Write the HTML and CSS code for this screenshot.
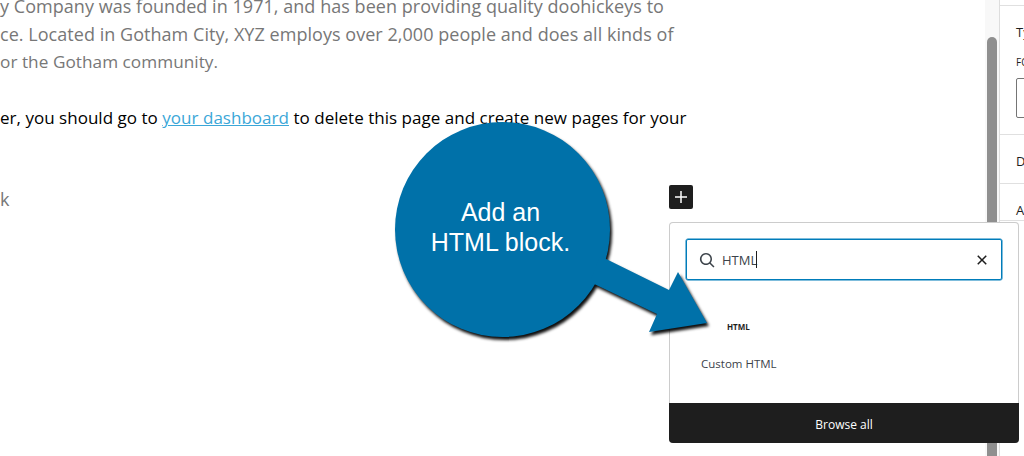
FILE: index.html
```html
<!DOCTYPE html>
<html lang="en">
<head>
  <meta charset="UTF-8" />
  <title>Edit Page</title>
  <link rel="stylesheet" href="styles.css">
</head>
<body>

  <div class="editor">
    <main class="canvas">
      <p class="para muted">
        <span>y Company was founded in 1971, and has been providing quality doohickeys to</span>
        <span>ce. Located in Gotham City, XYZ employs over 2,000 people and does all kinds of</span>
        <span class="tight">or the Gotham community.</span>
      </p>
      <p class="para">
        <span>er, you should go to <a href="#">your dashboard</a> to delete this page and create new pages for your</span>
      </p>
      <p class="para muted last">
        <span>k</span>
      </p>
    </main>

    <div class="scrollbar"><div class="thumb"></div></div>

    <aside class="sidebar">
      <div class="side-top"></div>
      <div class="side-section typo">
        <div class="side-title">Ty</div>
        <div class="side-label">FO</div>
        <div class="side-input"></div>
      </div>
      <div class="side-section short"><div class="side-title">D</div></div>
      <div class="side-section"><div class="side-title">A</div></div>
    </aside>
  </div>

  <!-- block inserter -->
  <button class="add-btn" aria-label="Add block">
    <svg width="24" height="24" viewBox="0 0 24 24"><path d="M11.25 6h1.5v5.25H18v1.5h-5.25V18h-1.5v-5.25H6v-1.5h5.25z" fill="#fff"/></svg>
  </button>

  <div class="inserter">
    <div class="search">
      <svg class="search-icon" width="24" height="24" viewBox="0 0 24 24"><path d="M13 5c-3.3 0-6 2.7-6 6 0 1.4.5 2.7 1.3 3.7l-3.8 3.8 1.1 1.1 3.8-3.8c1 .8 2.3 1.3 3.7 1.3 3.3 0 6-2.7 6-6S16.3 5 13 5zm0 10.5c-2.5 0-4.5-2-4.5-4.5s2-4.5 4.5-4.5 4.5 2 4.5 4.5-2 4.5-4.5 4.5z" fill="#3c434a" transform="matrix(-1 0 0 1 24 0)"/></svg>
      <span class="search-text">HTML</span><span class="caret"></span>
      <svg class="clear-icon" width="24" height="24" viewBox="0 0 24 24"><path d="M12 13.06l3.71 3.71 1.06-1.06L13.06 12l3.71-3.71-1.06-1.06L12 10.94 8.29 7.23 7.23 8.29 10.94 12l-3.71 3.71 1.06 1.06z" fill="#1e1e1e"/></svg>
    </div>
    <div class="results">
      <div class="block-item">
        <div class="block-icon">HTML</div>
        <div class="block-name">Custom HTML</div>
      </div>
    </div>
    <div class="browse">Browse all</div>
  </div>

  <!-- annotation drawn over the screenshot -->
  <svg class="callout" width="1024" height="456" viewBox="0 0 1024 456">
    <g class="callout-shape">
      <circle cx="502.5" cy="229.5" r="107.5"/>
      <polygon points="600,256 669,290 678,272 707,323 649,332 657,314 590,282"/>
    </g>
    <text x="500.5" y="221">Add an</text>
    <text x="500.5" y="251">HTML block.</text>
  </svg>

</body>
</html>
```

FILE: styles.css
```css
* {
  box-sizing: border-box;
}
html, body {
  height: 100%;
}
body {
  margin: 0;
  background: #fff;
  font-family: "Open Sans", sans-serif;
  color: #000;
  overflow: hidden;
}
.editor {
  display: flex;
  height: 456px;
}
.canvas {
  flex: 1;
  overflow: hidden;
  margin-top: -8px;
}
.para {
  margin: 0 0 28px;
  font-size: 17px;
  letter-spacing: .025px;
  line-height: 28px;
  white-space: nowrap;
}
.para span {
  display: block;
}
.para.last {
  margin-top: 53px;
}
.muted {
  color: #777;
  font-size: 18px;
  letter-spacing: .04px;
}
.para .tight {
  font-size: 17.2px;
}
.para a {
  color: #3ba7d8;
}

.scrollbar {
  width: 14px;
  background: #f8f8f8;
  padding-top: 37px;
  padding-left: 2px;
}
.thumb {
  width: 10px;
  height: 420px;
  background: #8f8f8f;
  border-radius: 5px 5px 0 0;
}

.sidebar {
  width: 25px;
  border-left: 1px solid #ddd;
  overflow: hidden;
  white-space: nowrap;
  padding-top: 5px;
}
.side-top {
  border-bottom: 1px solid #e0e0e0;
}
.side-section {
  padding: 16px 0 0 16px;
  border-bottom: 1px solid #e0e0e0;
}
.typo {
  height: 129px;
}
.short {
  height: 49px;
}
.side-title {
  font-size: 13px;
  line-height: 20px;
  font-weight: 500;
  color: #1e1e1e;
}
.side-label {
  margin-top: 12px;
  font-size: 10px;
  line-height: 16px;
  color: #1e1e1e;
}
.side-input {
  width: 40px;
  height: 40px;
  margin-top: 8px;
  border: 1px solid #757575;
  border-radius: 2px;
}

.add-btn {
  position: absolute;
  left: 669px;
  top: 185px;
  width: 24px;
  height: 24px;
  padding: 0;
  border: none;
  border-radius: 2px;
  background: #1e1e1e;
}
.add-btn svg {
  display: block;
}

.inserter {
  position: absolute;
  left: 669px;
  top: 222px;
  width: 350px;
  height: 221px;
  display: flex;
  flex-direction: column;
  background: #fff;
  box-shadow: inset 0 0 0 1px #ccc;
  border-radius: 4px;
  overflow: hidden;
}
.search {
  display: flex;
  align-items: center;
  height: 41px;
  margin: 17px 17px 0;
  padding: 0 7px 0 12px;
  border: 1px solid #007cba;
  box-shadow: 0 0 0 .5px #007cba;
  border-radius: 2px;
  font-size: 13px;
  color: #1e1e1e;
}
.search-icon {
  width: 24px;
  margin-left: -4px;
  margin-right: 3px;
}
.search-text {
  color: #3c434a;
}
.caret {
  width: 1px;
  height: 17px;
  margin-left: -1px;
  background: #1e1e1e;
}
.clear-icon {
  margin-left: auto;
}
.results {
  flex: 1;
  padding: 35px 0 0 17px;
}
.block-item {
  width: 100px;
  font-size: 11.5px;
  color: #3c434a;
}
.block-icon {
  height: 24px;
  padding-left: 41px;
  font-size: 8px;
  font-weight: 700;
  line-height: 24px;
  color: #1e1e1e;
}
.block-name {
  margin-top: 17px;
  padding-left: 15px;
  line-height: 16px;
  white-space: nowrap;
}
.browse {
  height: 40px;
  background: #1e1e1e;
  color: #fff;
  font-size: 12px;
  font-weight: 500;
  line-height: 44px;
  text-align: center;
}

.callout {
  position: absolute;
  left: 0;
  top: 0;
  pointer-events: none;
}
.callout-shape {
  fill: #0071a9;
  filter: drop-shadow(2px 3px 1.5px rgba(0,0,0,.95));
}
.callout text {
  font-family: "Liberation Sans", Arial, sans-serif;
  font-size: 25px;
  fill: #fff;
  text-anchor: middle;
}
```
